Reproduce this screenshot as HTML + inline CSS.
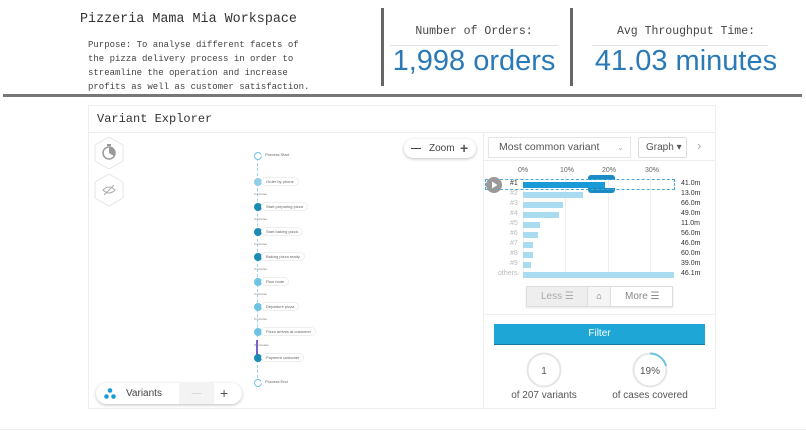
<!DOCTYPE html>
<html><head><meta charset="utf-8"><style>
*{box-sizing:border-box;margin:0;padding:0}
body{width:806px;height:431px;background:#fff;position:relative;overflow:hidden;font-family:"Liberation Sans",sans-serif;color:#555}
.a{position:absolute}
.mono{font-family:"Liberation Mono",monospace}
.node{position:absolute;width:8px;height:8px;border-radius:50%}
.lab{position:absolute;font-size:4px;color:#666;border:1px solid #eee;border-radius:5px;padding:1px 4px;background:#fff;white-space:nowrap}
.dur{position:absolute;font-size:3px;color:#777}
.row{position:absolute;left:0;width:240px;height:10px;font-size:7px}
</style></head><body>
<div class="a mono" style="left:80px;top:12px;font-size:13.4px;color:#333">Pizzeria Mama Mia Workspace</div>
<div class="a mono" style="left:88px;top:38px;font-size:9px;line-height:14px;color:#444">Purpose: To analyse different facets of<br>the pizza delivery process in order to<br>streamline the operation and increase<br>profits as well as customer satisfaction.</div>
<div class="a" style="left:381px;top:8px;width:3px;height:78px;background:#666"></div>
<div class="a" style="left:570px;top:8px;width:3px;height:78px;background:#666"></div>
<div class="a mono" style="left:386px;top:25px;width:176px;text-align:center;font-size:11.5px;color:#444">Number of Orders:</div>
<div class="a" style="left:390px;top:45px;width:168px;height:1px;background:#e3e3e3"></div>
<div class="a" style="left:386px;top:45px;width:176px;text-align:center;font-size:29px;color:#2a7ab8">1,998 orders</div>
<div class="a mono" style="left:596px;top:25px;width:180px;text-align:center;font-size:11.5px;color:#444">Avg Throughput Time:</div>
<div class="a" style="left:592px;top:45px;width:176px;height:1px;background:#e3e3e3"></div>
<div class="a" style="left:586px;top:45px;width:200px;text-align:center;font-size:29px;color:#2a7ab8">41.03 minutes</div>
<div class="a" style="left:3px;top:94px;width:799px;height:3px;background:#777"></div>

<div class="a" style="left:88px;top:105px;width:628px;height:304px;border:1px solid #eee"></div>
<div class="a mono" style="left:97px;top:112px;font-size:12px;color:#333">Variant Explorer</div>
<div class="a" style="left:89px;top:132px;width:626px;height:1px;background:#eee"></div>
<div class="a" style="left:483px;top:132px;width:1px;height:276px;background:#eee"></div>

<svg class="a" style="left:93px;top:136px" width="32" height="72" viewBox="0 0 32 72">
<polygon points="16,1 30,9 30,25 16,33 2,25 2,9" fill="#fff" stroke="#e5e5e5"/>
<circle cx="16" cy="17" r="6" fill="none" stroke="#999" stroke-width="1.5"/><path d="M16 17 L16 11 A6 6 0 0 1 21 20Z" fill="#999"/><rect x="14" y="8" width="4" height="2" fill="#999"/>
<polygon points="16,38 30,46 30,62 16,70 2,62 2,46" fill="#fff" stroke="#e5e5e5"/>
<path d="M10 54 Q16 48 22 54 Q16 60 10 54Z" fill="none" stroke="#aaa"/><line x1="11" y1="59" x2="21" y2="49" stroke="#aaa"/>
</svg>
<div class="a" style="left:404px;top:139px;width:72px;height:19px;border-radius:10px;box-shadow:0 1px 3px rgba(0,0,0,.25);background:#fff;font-size:10px;color:#444;line-height:19px">
<span style="position:absolute;left:7px;font-weight:bold">—</span><span style="position:absolute;left:25px">Zoom</span><span style="position:absolute;left:56px;font-size:14px;font-weight:bold;color:#555">+</span></div>
<div class="a" style="left:96px;top:383px;width:146px;height:21px;border-radius:11px;box-shadow:0 1px 3px rgba(0,0,0,.25);background:#fff;font-size:10px;color:#444;line-height:21px;overflow:hidden">
<svg class="a" style="left:8px;top:5px" width="12" height="11"><circle cx="6" cy="2.5" r="2.3" fill="#1a9ad6"/><circle cx="2.5" cy="8.5" r="2.3" fill="#1a9ad6"/><circle cx="9.5" cy="8.5" r="2.3" fill="#1a9ad6"/></svg>
<span class="a" style="left:30px">Variants</span><span class="a" style="left:83px;width:35px;height:21px;background:#f3f3f3;text-align:center;color:#ccc">—</span><span class="a" style="left:124px;font-size:14px;color:#555">+</span></div>

<div class="a" style="left:257px;top:158px;width:1px;height:225px;border-left:1px dashed #9cd3ea"></div>
<div class="a" style="left:256px;top:340px;width:2px;height:15px;background:#7a5fd0"></div>
<div class="node" style="left:254px;top:152px;border:1px solid #6cc3e3;background:#fff"></div><div class="lab" style="left:261px;top:151px;border:none">Process Start</div>
<div class="node" style="left:254px;top:178px;background:#8fd0e8"></div><div class="lab" style="left:261px;top:177px">Order by phone</div>
<div class="dur" style="left:254px;top:192px">2 minutes</div>
<div class="node" style="left:254px;top:203px;background:#1a8cb4"></div><div class="lab" style="left:261px;top:202px">Start preparing pizza</div>
<div class="dur" style="left:254px;top:217px">4 minutes</div>
<div class="node" style="left:254px;top:228px;background:#1a8cb4"></div><div class="lab" style="left:261px;top:227px">Start baking pizza</div>
<div class="dur" style="left:254px;top:242px">6 minutes</div>
<div class="node" style="left:254px;top:253px;background:#1a8cb4"></div><div class="lab" style="left:261px;top:252px">Baking pizza ready</div>
<div class="dur" style="left:254px;top:267px">3 minutes</div>
<div class="node" style="left:254px;top:278px;background:#6cc3e3"></div><div class="lab" style="left:261px;top:277px">Plan route</div>
<div class="dur" style="left:254px;top:292px">3 minutes</div>
<div class="node" style="left:254px;top:303px;background:#6cc3e3"></div><div class="lab" style="left:261px;top:302px">Departure pizza</div>
<div class="dur" style="left:254px;top:317px">5 minutes</div>
<div class="node" style="left:254px;top:328px;background:#6cc3e3"></div><div class="lab" style="left:261px;top:327px">Pizza arrives at customer</div>
<div class="dur" style="left:254px;top:343px">20 minutes</div>
<div class="node" style="left:254px;top:354px;background:#1a8cb4"></div><div class="lab" style="left:261px;top:353px">Payment customer</div>
<div class="node" style="left:254px;top:379px;border:1px solid #6cc3e3;background:#fff"></div><div class="lab" style="left:261px;top:378px;border:none">Process End</div>

<div class="a" style="left:488px;top:137px;width:143px;height:21px;border:1px solid #e5e5e5;font-size:10.5px;color:#555;line-height:19px;padding-left:10px">Most common variant<span style="position:absolute;right:6px;color:#aaa;font-size:8px">⌄</span></div>
<div class="a" style="left:638px;top:137px;width:49px;height:21px;border:1px solid #ddd;border-radius:2px;font-size:10px;color:#555;line-height:19px;padding-left:7px">Graph ▾</div>
<div class="a" style="left:697px;top:138px;font-size:13px;color:#aaa">›</div>
<div class="a" style="left:484px;top:160px;width:231px;height:1px;background:#eee"></div>

<div class="a" style="left:484px;top:166px;width:232px;height:120px;font-size:7px;color:#666">
<span class="a" style="left:34px;top:1px">0%</span><span class="a" style="left:76px;top:1px">10%</span><span class="a" style="left:118px;top:1px">20%</span><span class="a" style="left:161px;top:1px">30%</span>
<div class="a" style="left:39px;top:10px;width:1px;height:100px;background:#eee"></div>
<div class="a" style="left:81px;top:10px;width:1px;height:100px;background:#eee"></div>
<div class="a" style="left:124px;top:10px;width:1px;height:100px;background:#eee"></div>
<div class="a" style="left:166px;top:10px;width:1px;height:100px;background:#eee"></div>
<div class="a" style="left:104px;top:9px;width:27px;height:5px;background:#1a8cc4;border-radius:3px 3px 0 0"></div>
<div class="a" style="left:104px;top:22px;width:27px;height:5px;background:#1a8cc4;border-radius:0 0 3px 3px"></div>
<div class="a" style="left:1px;top:13px;width:190px;height:11px;border:1px dashed #4aa9d8"></div>
<svg class="a" style="left:2px;top:11px" width="16" height="16"><circle cx="8" cy="8" r="8" fill="#999"/><path d="M6 4.5 L11.5 8 L6 11.5Z" fill="#fff"/></svg>
</div>
<div class="a" style="left:484px;top:180px;width:232px;height:100px;font-size:7px">
<div class="row" style="top:0"><span class="a" style="left:26px;color:#333">#1</span><div class="a" style="left:39px;top:2px;width:82px;height:6px;background:#1a9ad6"></div><span class="a" style="left:197px;color:#333">41.0m</span></div>
<div class="row" style="top:10px"><span class="a" style="left:26px;color:#bbb">#2</span><div class="a" style="left:39px;top:2px;width:60px;height:6px;background:#a9dcef"></div><span class="a" style="left:197px;color:#333">13.0m</span></div>
<div class="row" style="top:20px"><span class="a" style="left:26px;color:#bbb">#3</span><div class="a" style="left:39px;top:2px;width:40px;height:6px;background:#a9dcef"></div><span class="a" style="left:197px;color:#333">66.0m</span></div>
<div class="row" style="top:30px"><span class="a" style="left:26px;color:#bbb">#4</span><div class="a" style="left:39px;top:2px;width:36px;height:6px;background:#a9dcef"></div><span class="a" style="left:197px;color:#333">49.0m</span></div>
<div class="row" style="top:40px"><span class="a" style="left:26px;color:#bbb">#5</span><div class="a" style="left:39px;top:2px;width:17px;height:6px;background:#a9dcef"></div><span class="a" style="left:197px;color:#333">11.0m</span></div>
<div class="row" style="top:50px"><span class="a" style="left:26px;color:#bbb">#6</span><div class="a" style="left:39px;top:2px;width:15px;height:6px;background:#a9dcef"></div><span class="a" style="left:197px;color:#333">56.0m</span></div>
<div class="row" style="top:60px"><span class="a" style="left:26px;color:#bbb">#7</span><div class="a" style="left:39px;top:2px;width:10px;height:6px;background:#a9dcef"></div><span class="a" style="left:197px;color:#333">46.0m</span></div>
<div class="row" style="top:70px"><span class="a" style="left:26px;color:#bbb">#8</span><div class="a" style="left:39px;top:2px;width:10px;height:6px;background:#a9dcef"></div><span class="a" style="left:197px;color:#333">60.0m</span></div>
<div class="row" style="top:80px"><span class="a" style="left:26px;color:#bbb">#9</span><div class="a" style="left:39px;top:2px;width:8px;height:6px;background:#a9dcef"></div><span class="a" style="left:197px;color:#333">39.0m</span></div>
<div class="row" style="top:90px"><span class="a" style="left:14px;color:#bbb">others</span><div class="a" style="left:39px;top:2px;width:151px;height:6px;background:#a9dcef"></div><span class="a" style="left:197px;color:#333">46.1m</span></div>
</div>
<div class="a" style="left:526px;top:286px;width:147px;height:21px;border:1px solid #ddd;font-size:10px;line-height:19px;box-shadow:0 1px 2px rgba(0,0,0,.1)">
<div class="a" style="left:0;top:0;width:60px;height:19px;background:#eee;color:#aaa;padding-left:14px">Less ☰</div>
<div class="a" style="left:60px;top:0;width:24px;height:19px;background:#f5f5f5;border-left:1px solid #ddd;border-right:1px solid #ddd;text-align:center;color:#666;font-size:9px">⌂</div>
<div class="a" style="left:98px;top:0;color:#888">More ☰</div></div>
<div class="a" style="left:484px;top:314px;width:231px;height:1px;background:#eee"></div>
<div class="a" style="left:494px;top:324px;width:211px;height:21px;background:#1ea7d6;border-bottom:1px solid #137a9e;color:#fff;font-size:10px;text-align:center;line-height:20px">Filter</div>
<svg class="a" style="left:525px;top:351px" width="150" height="38">
<circle cx="19" cy="19" r="16.5" fill="none" stroke="#e5e5e5" stroke-width="2"/>
<circle cx="125" cy="19" r="16.5" fill="none" stroke="#e5e5e5" stroke-width="2"/>
<path d="M125 2.5 A16.5 16.5 0 0 1 141 15" fill="none" stroke="#6cc3e3" stroke-width="2"/>
<text x="19" y="23" font-size="10" text-anchor="middle" fill="#555" font-family="Liberation Sans">1</text>
<text x="125" y="23" font-size="10" text-anchor="middle" fill="#555" font-family="Liberation Sans">19%</text></svg>
<div class="a" style="left:494px;top:390px;width:100px;text-align:center;font-size:10px;color:#555">of 207 variants</div>
<div class="a" style="left:600px;top:390px;width:100px;text-align:center;font-size:10px;color:#555">of cases covered</div>
<div class="a" style="left:0;top:429px;width:806px;height:1px;background:#eee"></div>
</body></html>
